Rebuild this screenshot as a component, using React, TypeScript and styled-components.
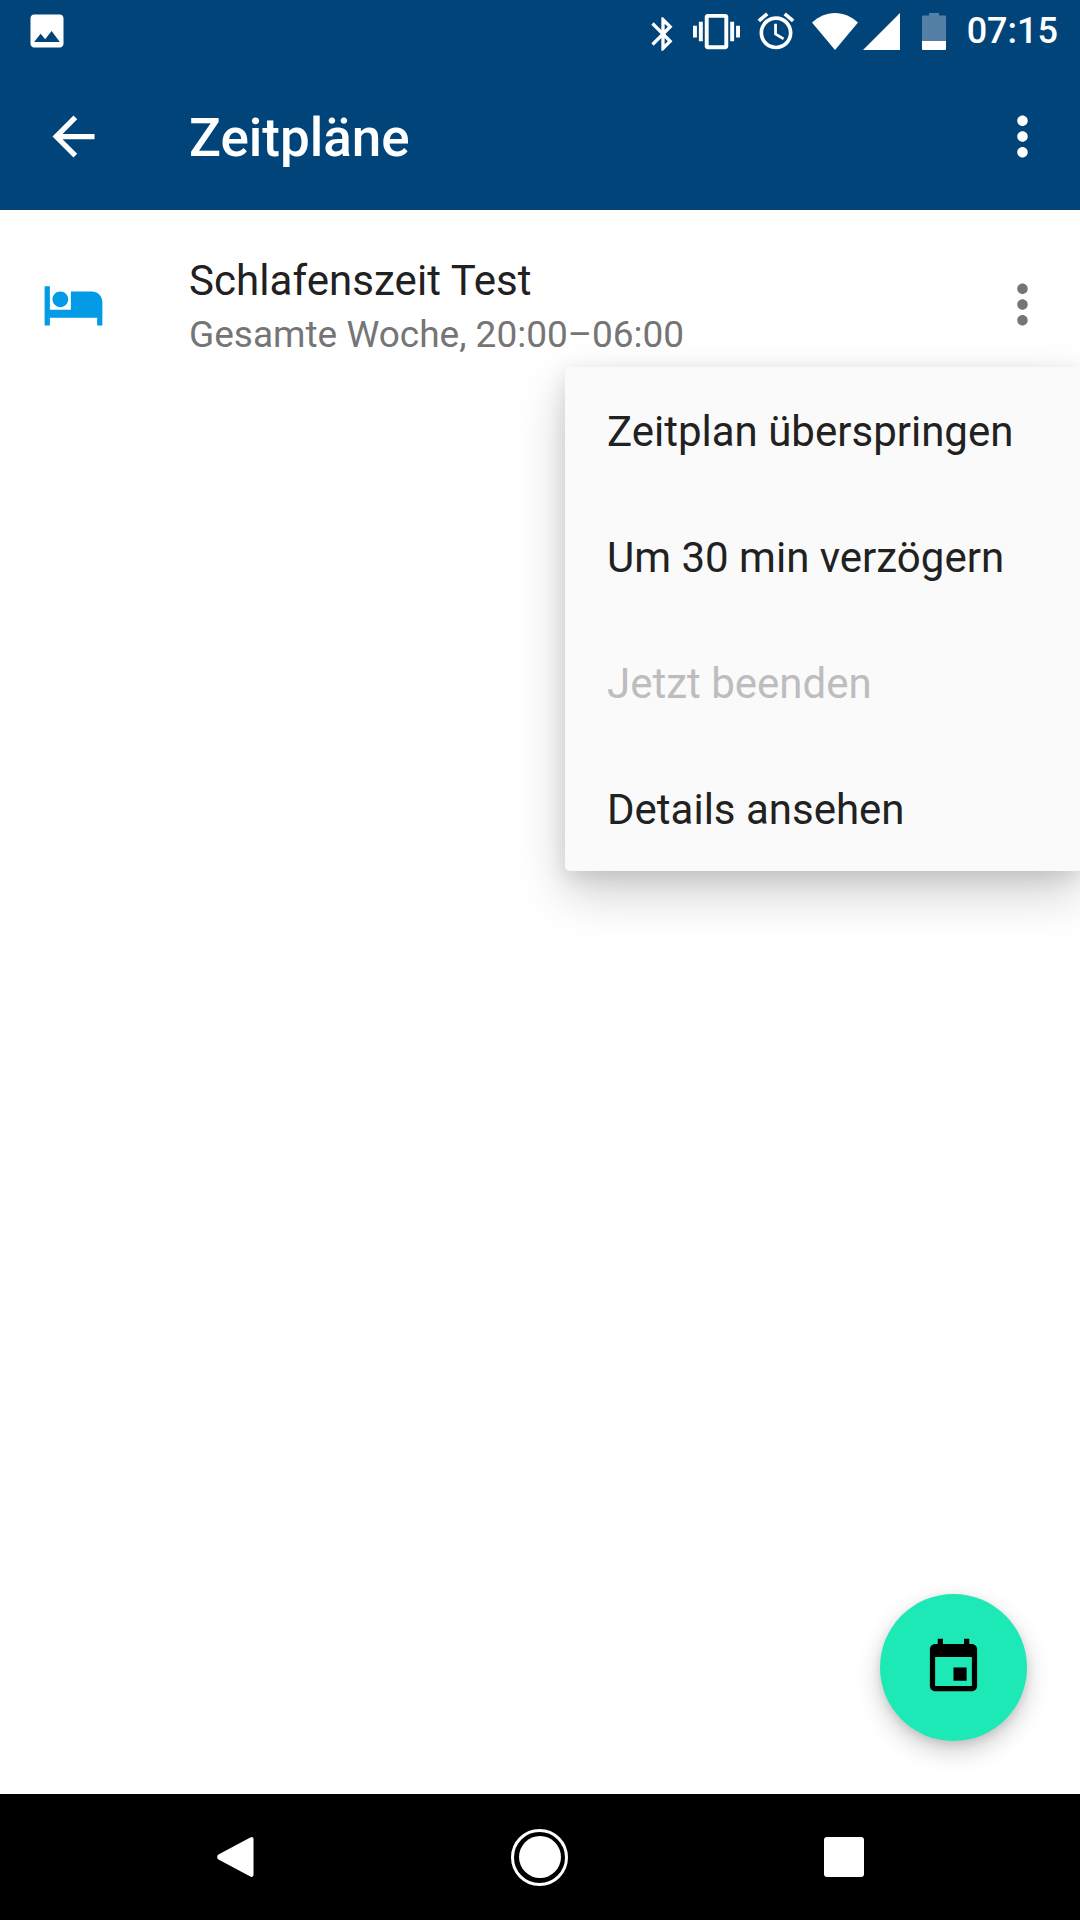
import styled, { createGlobalStyle } from 'styled-components';

const GlobalStyle = createGlobalStyle`
  html, body {
    margin: 0;
    padding: 0;
    background: #fff;
    font-family: 'Roboto', sans-serif;
  }
`;

const Screen = styled.div`
  display: flex;
  flex-direction: column;
  width: 1080px;
  height: 1920px;
  overflow: hidden;
`;

const Header = styled.header`
  background: #01447a;
  color: #fff;
  height: 210px;
`;

const StatusBar = styled.div`
  display: flex;
  align-items: flex-start;
  height: 63px;
  padding-right: 22px;
`;

const StatusIcon = styled.svg<{ $left: number; $top: number }>`
  flex: none;
  display: block;
  margin-left: ${(p) => p.$left}px;
  margin-top: ${(p) => p.$top}px;
  fill: #fff;
`;

const Spacer = styled.div`
  flex: 1;
`;

const Clock = styled.span`
  margin-left: 21px;
  font-size: 36px;
  font-weight: 500;
  line-height: 63px;
`;

const AppBar = styled.div`
  display: flex;
  align-items: center;
  height: 147px;
  padding: 0 26px 0 42px;
`;

const Title = styled.h1`
  flex: 1;
  margin: 0 0 0 84px;
  padding-top: 4px;
  font-size: 53px;
  font-weight: 500;
  line-height: 1;
`;

const Icon = styled.svg<{ $color: string }>`
  flex: none;
  display: block;
  width: 63px;
  height: 63px;
  fill: ${(p) => p.$color};
`;

const Content = styled.main`
  position: relative;
  flex: 1;
  background: #fff;
`;

const ScheduleRow = styled.div`
  display: flex;
  align-items: center;
  height: 189px;
  padding: 0 26px 0 42px;
`;

const RowText = styled.div`
  flex: 1;
  margin-left: 84px;
  padding-top: 2px;
`;

const RowTitle = styled.div`
  color: #212121;
  font-size: 42px;
  line-height: 56px;
  letter-spacing: 0.07px;
`;

const RowSubtitle = styled.div`
  padding-top: 2px;
  color: #757575;
  font-size: 37px;
  line-height: 48px;
`;

const Menu = styled.div`
  position: absolute;
  top: 157px;
  right: 0;
  width: 515px;
  background: #fafafa;
  border-radius: 5px 0 0 5px;
  box-shadow: 0 21px 50px rgba(0, 0, 0, 0.2), 0 6px 20px rgba(0, 0, 0, 0.1);
`;

const MenuItem = styled.div<{ $disabled?: boolean }>`
  display: flex;
  align-items: center;
  box-sizing: border-box;
  height: 126px;
  padding: 2px 0 0 42px;
  color: ${(p) => (p.$disabled ? '#bdbdbd' : '#212121')};
  font-size: 42px;
`;

const Fab = styled.button`
  position: absolute;
  right: 53px;
  bottom: 53px;
  display: flex;
  align-items: center;
  justify-content: center;
  width: 147px;
  height: 147px;
  padding: 0;
  border: none;
  border-radius: 50%;
  background: #1de9b6;
  box-shadow: 0 10px 24px rgba(0, 0, 0, 0.2), 0 3px 8px rgba(0, 0, 0, 0.1);
`;

const NavBar = styled.nav`
  display: flex;
  align-items: center;
  height: 126px;
  background: #000;
`;

const NavSlot = styled.div<{ $width: number }>`
  display: flex;
  justify-content: center;
  width: ${(p) => p.$width}px;
`;

const HomeRing = styled.div`
  display: flex;
  align-items: center;
  justify-content: center;
  box-sizing: border-box;
  width: 57px;
  height: 57px;
  border: 3px solid #fff;
  border-radius: 50%;
`;

const HomeDot = styled.div`
  width: 42px;
  height: 42px;
  border-radius: 50%;
  background: #fff;
`;

const RecentSquare = styled.div`
  width: 40px;
  height: 40px;
  border-radius: 3px;
  background: #fff;
`;

const MORE = 'M12 8c1.1 0 2-.9 2-2s-.9-2-2-2-2 .9-2 2 .9 2 2 2zm0 2c-1.1 0-2 .9-2 2s.9 2 2 2 2-.9 2-2-.9-2-2-2zm0 6c-1.1 0-2 .9-2 2s.9 2 2 2 2-.9 2-2-.9-2-2-2z';

const menuItems = [
  { label: 'Zeitplan überspringen' },
  { label: 'Um 30 min verzögern' },
  { label: 'Jetzt beenden', disabled: true },
  { label: 'Details ansehen' },
];

export default function App() {
  return (
    <Screen>
      <GlobalStyle />
      <Header>
        <StatusBar>
          <StatusIcon $left={25} $top={9} width={44} height={44} viewBox="0 0 24 24">
            <path d="M21 19V5c0-1.1-.9-2-2-2H5c-1.1 0-2 .9-2 2v14c0 1.1.9 2 2 2h14c1.1 0 2-.9 2-2zM8.500 13.500l2.500 3.010L14.500 12l4.500 6H5l3.500-4.500z" />
          </StatusIcon>
          <Spacer />
          <StatusIcon $left={0} $top={14} width={40} height={40} viewBox="0 0 24 24">
            <path d="M17.710 7.710L12 2h-1v7.590L6.410 5 5 6.410 10.590 12 5 17.590 6.410 19 11 14.410V22h1l5.710-5.710-4.300-4.290 4.300-4.290zM13 5.830l1.880 1.880L13 9.590V5.830zm1.880 10.460L13 18.170v-3.760l1.880 1.880z" />
          </StatusIcon>
          <StatusIcon $left={10} $top={8} width={47} height={47} viewBox="0 0 24 24">
            <path d="M0 15h2V9H0v6zm3 2h2V7H3v10zm19-8v6h2V9h-2zm-3 8h2V7h-2v10zM16.500 3h-9C6.670 3 6 3.670 6 4.500v15c0 .83.67 1.500 1.500 1.500h9c.83 0 1.500-.67 1.500-1.500v-15c0-.83-.67-1.500-1.500-1.500zM16 19H8V5h8v14z" />
          </StatusIcon>
          <StatusIcon $left={14} $top={9} width={44} height={44} viewBox="0 0 24 24">
            <path d="M22 5.720l-4.600-3.860-1.290 1.530 4.600 3.860L22 5.720zM7.880 3.390L6.600 1.860 2 5.710l1.290 1.530 4.590-3.850zM12.500 8H11v6l4.750 2.850.75-1.230-4-2.370V8zM12 4c-4.970 0-9 4.030-9 9s4.020 9 9 9c4.970 0 9-4.030 9-9s-4.030-9-9-9zm0 16c-3.870 0-7-3.130-7-7s3.130-7 7-7 7 3.130 7 7-3.130 7-7 7z" />
          </StatusIcon>
          <StatusIcon $left={14} $top={13} width={46} height={37} viewBox="0 0 46 37">
            <path d="M23 37L0 9.500C6.500 3.600 14.400 0 23 0s16.500 3.600 23 9.500z" />
          </StatusIcon>
          <StatusIcon $left={5} $top={13} width={37} height={37} viewBox="0 0 37 37">
            <path d="M0 37L37 0v37z" />
          </StatusIcon>
          <StatusIcon $left={22} $top={13} width={24} height={37} viewBox="0 0 24 37">
            <path d="M7 0h10v2.500h6a1 1 0 0 1 1 1V28H0V3.500a1 1 0 0 1 1-1h6z" fill="#5480a6" />
            <path d="M0 28h24v8a1 1 0 0 1-1 1H1a1 1 0 0 1-1-1z" />
          </StatusIcon>
          <Clock>07:15</Clock>
        </StatusBar>
        <AppBar>
          <Icon $color="#fff" viewBox="0 0 24 24">
            <path d="M20 11H7.830l5.590-5.590L12 4l-8 8 8 8 1.410-1.410L7.830 13H20v-2z" />
          </Icon>
          <Title>Zeitpläne</Title>
          <Icon $color="#fff" viewBox="0 0 24 24">
            <path d={MORE} />
          </Icon>
        </AppBar>
      </Header>
      <Content>
        <ScheduleRow>
          <Icon $color="#039be5" viewBox="0 0 24 24">
            <path d="M7 13c1.660 0 3-1.340 3-3S8.660 7 7 7s-3 1.340-3 3 1.340 3 3 3zm12-6h-8v7H3V5H1v15h2v-3h18v3h2v-9c0-2.210-1.790-4-4-4z" />
          </Icon>
          <RowText>
            <RowTitle>Schlafenszeit Test</RowTitle>
            <RowSubtitle>Gesamte Woche, 20:00–06:00</RowSubtitle>
          </RowText>
          <Icon $color="#757575" viewBox="0 0 24 24">
            <path d={MORE} />
          </Icon>
        </ScheduleRow>
        <Menu>
          {menuItems.map((item) => (
            <MenuItem key={item.label} $disabled={item.disabled}>
              {item.label}
            </MenuItem>
          ))}
        </Menu>
        <Fab>
          <Icon $color="#000" viewBox="0 0 24 24">
            <path d="M17 12h-5v5h5v-5zM16 1v2H8V1H6v2H5c-1.110 0-1.990.9-1.990 2L3 19c0 1.100.89 2 2 2h14c1.100 0 2-.9 2-2V5c0-1.100-.9-2-2-2h-1V1h-2zm3 18H5V8h14v11z" />
          </Icon>
        </Fab>
      </Content>
      <NavBar>
        <NavSlot $width={470}>
          <svg width={37} height={42} viewBox="0 0 38 42">
            <path d="M36 0.500a2 2 0 0 1 1.500 2v37a2 2 0 0 1-3.300 1.500L1.500 23.500a3 3 0 0 1 0-5L34.200 1z" fill="#fff" />
          </svg>
        </NavSlot>
        <NavSlot $width={139}>
          <HomeRing>
            <HomeDot />
          </HomeRing>
        </NavSlot>
        <NavSlot $width={470}>
          <RecentSquare />
        </NavSlot>
      </NavBar>
    </Screen>
  );
}
